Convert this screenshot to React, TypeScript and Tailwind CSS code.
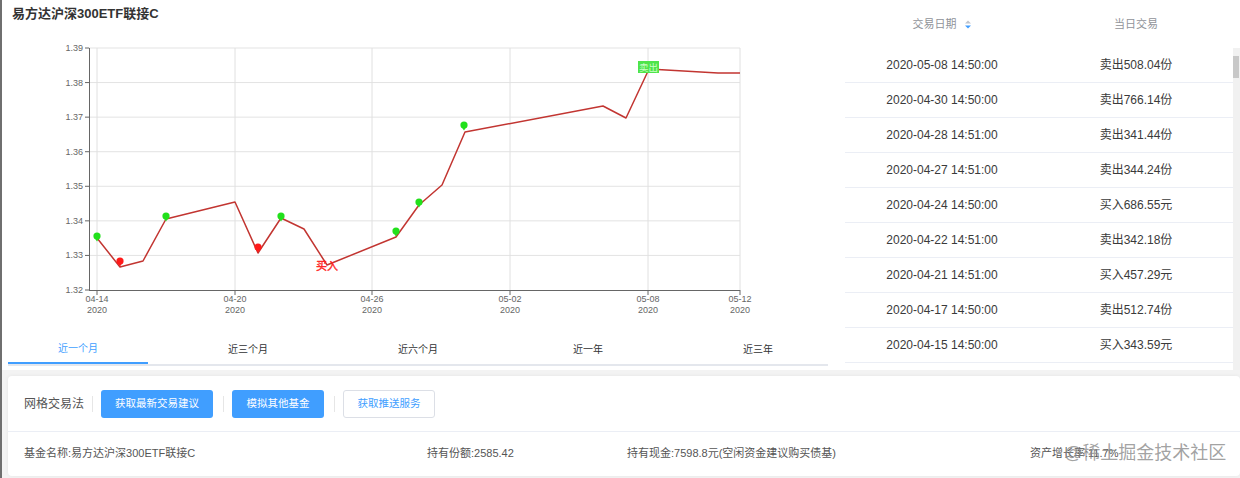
const trades = [
  ["2020-05-08 14:50:00", "卖出508.04份"],
  ["2020-04-30 14:50:00", "卖出766.14份"],
  ["2020-04-28 14:51:00", "卖出341.44份"],
  ["2020-04-27 14:51:00", "卖出344.24份"],
  ["2020-04-24 14:50:00", "买入686.55元"],
  ["2020-04-22 14:51:00", "卖出342.18份"],
  ["2020-04-21 14:51:00", "买入457.29元"],
  ["2020-04-17 14:50:00", "卖出512.74份"],
  ["2020-04-15 14:50:00", "买入343.59元"],
];

const tabs = ["近一个月", "近三个月", "近六个月", "近一年", "近三年"];

const yTicks = ["1.39", "1.38", "1.37", "1.36", "1.35", "1.34", "1.33", "1.32"];
const xTicks: [number, string][] = [
  [97, "04-14"],
  [235, "04-20"],
  [372, "04-26"],
  [510, "05-02"],
  [648, "05-08"],
  [740, "05-12"],
];

// page coordinates of each trading day
const line = [
  [97, 238], [120, 267], [143, 261], [166, 219], [235, 202], [258, 253],
  [281, 218], [304, 229], [327, 265], [396, 237], [419, 205], [442, 185],
  [465, 132], [603, 106], [626, 118], [649, 69], [718, 73], [740, 73],
];

const pins: [number, number, string][] = [
  [97, 237, "#22e01c"],
  [120, 262, "#ff1a1a"],
  [166, 217, "#22e01c"],
  [258, 248, "#ff1a1a"],
  [281, 217, "#22e01c"],
  [396, 232, "#22e01c"],
  [419, 203, "#22e01c"],
  [464, 126, "#22e01c"],
];

function Pin({ x, y, c }: { x: number; y: number; c: string }) {
  return (
    <g fill={c}>
      <circle cx={x} cy={y - 1} r={3.6} />
      <path d={`M${x - 2.4} ${y + 1} L${x} ${y + 4.5} L${x + 2.4} ${y + 1} Z`} />
    </g>
  );
}

function Chart() {
  const yAt = (i: number) => 48 + i * (242 / 7);
  return (
    <svg width={843} height={304} className="block">
      <g transform="translate(-2 -30)" fontFamily="Liberation Sans, sans-serif">
        {yTicks.map((t, i) => (
          <g key={t}>
            {i < 7 && <line x1={89} x2={740} y1={yAt(i)} y2={yAt(i)} stroke="#e3e3e3" />}
            <line x1={85} x2={89} y1={yAt(i)} y2={yAt(i)} stroke="#666" />
            <text x={83} y={yAt(i) + 3} fontSize={9} fill="#666" textAnchor="end">
              {t}
            </text>
          </g>
        ))}
        {xTicks.map(([x, d]) => (
          <g key={d}>
            <line x1={x} x2={x} y1={48} y2={290} stroke="#e0e0e0" />
            <line x1={x} x2={x} y1={290} y2={295} stroke="#666" />
            <text x={x} y={302} fontSize={9} fill="#666" textAnchor="middle">
              {d}
            </text>
            <text x={x} y={313} fontSize={9} fill="#666" textAnchor="middle">
              2020
            </text>
          </g>
        ))}
        <line x1={89.5} x2={89.5} y1={48} y2={290} stroke="#666" />
        <line x1={89} x2={740} y1={290.5} y2={290.5} stroke="#666" />
        <polyline
          points={line.map((p) => p.join(",")).join(" ")}
          fill="none"
          stroke="#c23531"
          strokeWidth={1.5}
          strokeLinejoin="round"
        />
        {pins.map(([x, y, c]) => (
          <Pin key={x} x={x} y={y} c={c} />
        ))}
        <text
          x={327}
          y={270}
          fontSize={11}
          fill="#ff1f1f"
          stroke="#ff1f1f"
          strokeWidth={0.4}
          textAnchor="middle"
          fontFamily="Noto Sans CJK SC, sans-serif"
        >
          买入
        </text>
        <rect x={638} y={61} width={21} height={12} fill="#4ee44a" />
        <text
          x={648.5}
          y={71}
          fontSize={9.5}
          fill="#caffc6"
          textAnchor="middle"
          fontFamily="Noto Sans CJK SC, sans-serif"
        >
          卖出
        </text>
      </g>
    </svg>
  );
}

function SortIcon() {
  return (
    <svg width={8} height={11} viewBox="0 0 8 11" className="ml-[7px]">
      <path d="M1 4.5 L4 1.5 L7 4.5 Z" fill="#c0c4cc" />
      <path d="M1 6.5 L4 9.5 L7 6.5 Z" fill="#409eff" />
    </svg>
  );
}

export default function App() {
  return (
    <div className="relative h-[478px] w-[1240px] overflow-hidden border-l-2 border-[#6f6f6f] bg-[#f3f3f3] font-['Liberation_Sans','Noto_Sans_CJK_SC',sans-serif]">
      <div className="flex h-[370px] bg-white">
        <div className="w-[843px]">
          <div className="h-[30px] pl-[10px] pt-[5px] text-[13px] font-bold leading-[18px] text-[#333]">
            易方达沪深300ETF联接C
          </div>
          <Chart />
          <div className="ml-[6px] flex w-[820px] justify-between border-b-2 border-[#e4e7ed]">
            {tabs.map((t, i) => (
              <div
                key={t}
                className={
                  i === 0
                    ? "-mb-[2px] flex h-[30px] w-[140px] items-center justify-center border-b-2 border-[#409eff] text-[10px] text-[#409eff]"
                    : "flex h-[30px] w-[140px] items-center justify-center text-[10px] text-[#303133]"
                }
              >
                {t}
              </div>
            ))}
          </div>
        </div>

        <div className="flex w-[395px] flex-col">
          <div className="flex h-[51px] w-[388px] items-center text-[11px] text-[#909399]">
            <div className="flex w-1/2 items-center justify-center">
              交易日期
              <SortIcon />
            </div>
            <div className="flex w-1/2 items-center justify-center">当日交易</div>
          </div>
          <div className="flex">
            <div className="w-[388px]">
              {trades.map(([d, t]) => (
                <div
                  key={d}
                  className="flex h-[35px] items-center border-b border-[#ebeef5] text-[12px] text-[#3a3a3a]"
                >
                  <div className="w-1/2 text-center">{d}</div>
                  <div className="w-1/2 text-center">{t}</div>
                </div>
              ))}
            </div>
            <div className="h-[322px] w-[7px] bg-[#f1f1f1] pt-[8px]">
              <div className="h-[22px] w-[6px] bg-[#c8c8c8]" />
            </div>
          </div>
        </div>
      </div>

      <div className="ml-[6px] mt-[6px] h-[100px] rounded-[4px] bg-white shadow-[0_0_4px_rgba(0,0,0,0.06)]">
        <div className="flex h-[56px] items-center border-b border-[#ebeef5] px-[16px]">
          <div className="w-[60px] whitespace-nowrap text-[12px] text-[#555]">网格交易法</div>
          <div className="ml-[8px] h-[16px] w-px bg-[#e6e6e6]" />
          <button className="ml-[8px] h-[28px] w-[112px] rounded-[3px] bg-[#409eff] text-[10.5px] text-white">
            获取最新交易建议
          </button>
          <div className="ml-[10px] h-[16px] w-px bg-[#e6e6e6]" />
          <button className="ml-[8px] h-[28px] w-[92px] rounded-[3px] bg-[#409eff] text-[10.5px] text-white">
            模拟其他基金
          </button>
          <div className="ml-[10px] h-[16px] w-px bg-[#e6e6e6]" />
          <button className="ml-[8px] h-[28px] w-[92px] rounded-[3px] border border-[#dcdfe6] bg-white text-[10.5px] text-[#409eff]">
            获取推送服务
          </button>
        </div>
        <div className="flex h-[43px] items-center whitespace-nowrap px-[16px] text-[11px] text-[#555]">
          <div className="w-[403px]">基金名称:易方达沪深300ETF联接C</div>
          <div className="w-[200px]">持有份额:2585.42</div>
          <div className="w-[403px]">持有现金:7598.8元(空闲资金建议购买债基)</div>
          <div>资产增长率:11.7%</div>
        </div>
      </div>

      <div className="absolute left-[1062px] top-[440px] whitespace-nowrap text-[18px] text-[#8a8a8a]/80">
        @稀土掘金技术社区
      </div>
    </div>
  );
}
